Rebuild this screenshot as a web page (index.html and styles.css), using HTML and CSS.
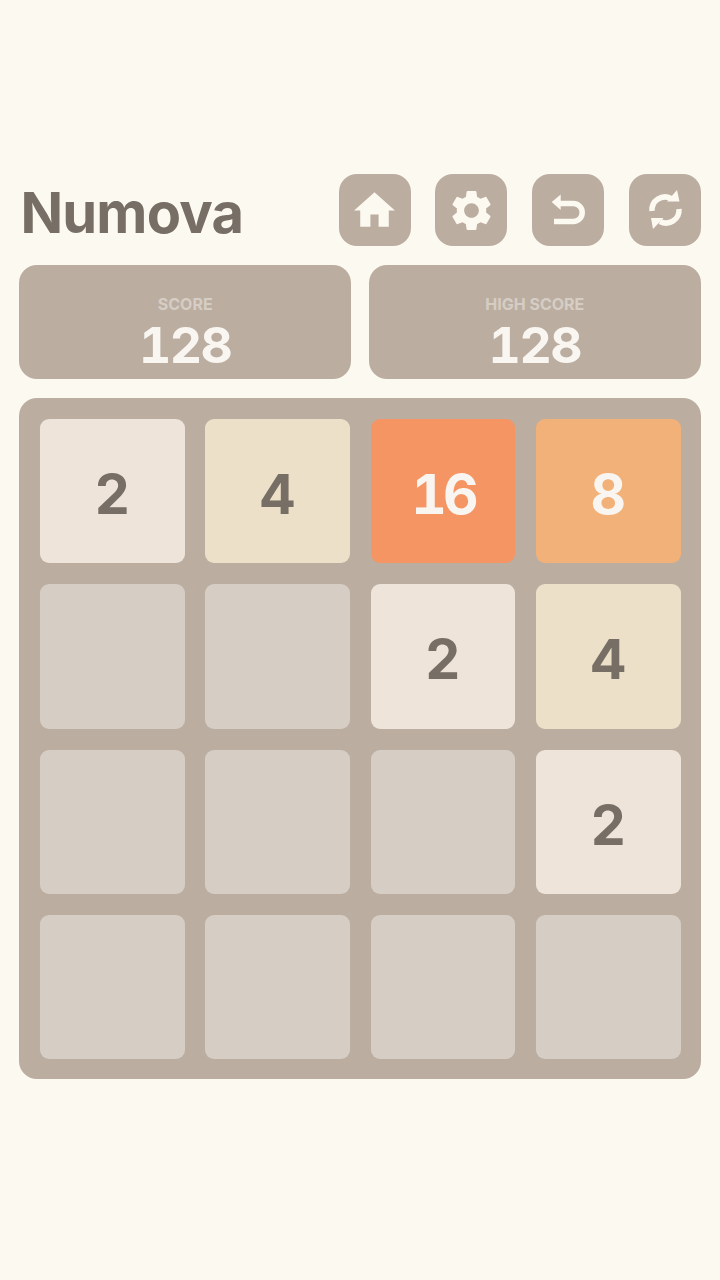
FILE: index.html
```html
<!DOCTYPE html>
<html lang="en">

<head>
  <meta charset="utf-8">
  <title>Numova</title>
  <link rel="stylesheet" href="styles.css">
</head>

<body>
  <div class="header">
    <h1 class="title">Numova</h1>
    <div class="actions">
      <button class="icon-button">
        <svg class="small" viewBox="0 0 24 24"><path d="M10 20v-6h4v6h5v-8h3L12 3 2 12h3v8z"/></svg>
      </button>
      <button class="icon-button">
        <svg class="small" viewBox="0 0 24 24"><path d="M19.14 12.94c.04-.3.06-.61.06-.94 0-.32-.02-.64-.07-.94l2.03-1.58c.18-.14.23-.41.12-.61l-1.92-3.32c-.12-.22-.37-.29-.59-.22l-2.39.96c-.5-.38-1.03-.7-1.62-.94l-.36-2.54c-.04-.24-.24-.41-.48-.41h-3.84c-.24 0-.43.17-.47.41l-.36 2.54c-.59.24-1.13.57-1.62.94l-2.39-.96c-.22-.08-.47 0-.59.22L2.74 8.87c-.12.21-.08.47.12.61l2.03 1.58c-.05.3-.09.63-.09.94s.02.64.07.94l-2.03 1.58c-.18.14-.23.41-.12.61l1.92 3.32c.12.22.37.29.59.22l2.39-.96c.5.38 1.03.7 1.62.94l.36 2.54c.05.24.24.41.48.41h3.84c.24 0 .44-.17.47-.41l.36-2.54c.59-.24 1.13-.56 1.62-.94l2.39.96c.22.08.47 0 .59-.22l1.92-3.32c.12-.22.07-.47-.12-.61l-2.01-1.58zM12 15.6c-1.98 0-3.6-1.62-3.6-3.6s1.62-3.6 3.6-3.6 3.6 1.62 3.6 3.6-1.62 3.6-3.6 3.6z"/></svg>
      </button>
      <button class="icon-button">
        <svg viewBox="0 0 72 72"><path class="line" d="M27 29.500H41.250A8.750 8.750 0 0 1 41.250 47.500H22"/><path d="M19.700 28L28.700 20.500V36z"/></svg>
      </button>
      <button class="icon-button">
        <svg viewBox="0 0 72 72"><path class="line" d="M23 37A13 13 0 0 1 42 24.500"/><path class="line" d="M50 35A13 13 0 0 1 31 47.500"/><path d="M48 16L50.500 27.500H38z"/><path d="M24 55L22 44H34.500z"/></svg>
      </button>
    </div>
  </div>

  <div class="scores">
    <div class="score-box">
      <div class="score-label">SCORE</div>
      <div class="score-value">128</div>
    </div>
    <div class="score-box">
      <div class="score-label">HIGH SCORE</div>
      <div class="score-value">128</div>
    </div>
  </div>

  <div class="board">
    <div class="tile t2">2</div>
    <div class="tile t4">4</div>
    <div class="tile t16">16</div>
    <div class="tile t8">8</div>

    <div class="tile"></div>
    <div class="tile"></div>
    <div class="tile t2">2</div>
    <div class="tile t4">4</div>

    <div class="tile"></div>
    <div class="tile"></div>
    <div class="tile"></div>
    <div class="tile t2">2</div>

    <div class="tile"></div>
    <div class="tile"></div>
    <div class="tile"></div>
    <div class="tile"></div>
  </div>
</body>

</html>
```

FILE: styles.css
```css
html,
body {
  background-color: #fcf9f0;
  margin: 0;
}

body {
  height: 1280px;
  box-sizing: border-box;
  padding: 174px 19.4px 0;
  font-family: Inter, sans-serif;
  overflow: hidden;
}

.header {
  display: flex;
  justify-content: space-between;
  align-items: center;
  height: 72px;
}

.title {
  margin: 6px 0 0 1px;
  font-size: 56px;
  font-weight: 700;
  letter-spacing: -0.8px;
  line-height: 72px;
  color: #776e65;
}

.actions {
  display: flex;
  gap: 24.6px;
}

.icon-button {
  width: 72px;
  height: 72px;
  padding: 0;
  border: 0;
  border-radius: 18px;
  background-color: #bbada0;
  display: flex;
  justify-content: center;
  align-items: center;
}

.icon-button svg {
  width: 72px;
  height: 72px;
  fill: #fcf9f0;
}

.icon-button .small {
  width: 49px;
  height: 49px;
}

.icon-button .line {
  fill: none;
  stroke: #fcf9f0;
  stroke-width: 5.5;
}

.scores {
  display: flex;
  gap: 18px;
  margin-top: 19px;
}

.score-box {
  flex: 1;
  height: 114px;
  box-sizing: border-box;
  padding-top: 28px;
  border-radius: 18px;
  background-color: #bbada0;
  text-align: center;
}

.score-label {
  font-size: 16px;
  font-weight: 700;
  line-height: 22px;
  color: #d6cdc4;
}

.score-value {
  font-size: 50px;
  font-weight: 700;
  font-variant-numeric: tabular-nums;
  letter-spacing: -1.5px;
  line-height: 60px;
  color: #f9f6f2;
}

.board {
  display: grid;
  grid-template-columns: repeat(4, 144.7px);
  grid-auto-rows: 144.5px;
  gap: 20.85px 20.65px;
  height: 681px;
  box-sizing: border-box;
  margin-top: 19.4px;
  padding: 20.5px;
  border-radius: 18px;
  background-color: #bbada0;
}

.tile {
  display: flex;
  justify-content: center;
  align-items: center;
  box-sizing: border-box;
  padding-top: 6px;
  border-radius: 9px;
  background-color: #d6cdc4;
  font-size: 55px;
  font-weight: 700;
  font-variant-numeric: tabular-nums;
  color: #776e65;
}

.t2 {
  background-color: #eee4da;
}

.t4 {
  background-color: #ede0c8;
}

.t8 {
  background-color: #f2b179;
  color: #f9f6f2;
}

.t16 {
  background-color: #f59563;
  color: #f9f6f2;
  letter-spacing: -4px;
}
```
